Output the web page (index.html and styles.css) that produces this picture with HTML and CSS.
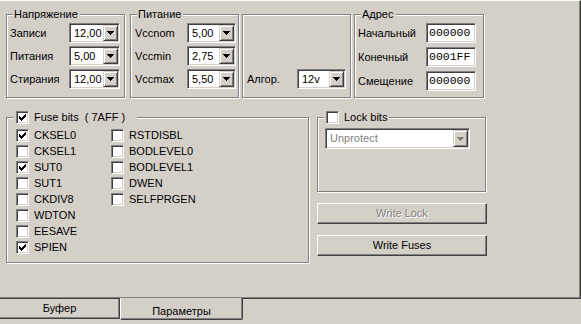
FILE: index.html
```html
<!DOCTYPE html>
<html>
<head>
<meta charset="utf-8">
<link rel="stylesheet" href="styles.css">
</head>
<body>
<div class="panel">
  <div class="top-row">
    <div class="group g1">
      <span class="legend">Напряжение</span>
      <div class="field"><span>Записи</span><div class="combo w51"><span class="val">12,00</span><span class="dd"><svg width="7" height="4" viewBox="0 0 7 4"><path d="M0 0h7v1h-7z M1 1h5v1h-5z M2 2h3v1h-3z M3 3h1v1h-1z" fill="#000"/></svg></span></div></div>
      <div class="field"><span>Питания</span><div class="combo w51"><span class="val">5,00</span><span class="dd"><svg width="7" height="4" viewBox="0 0 7 4"><path d="M0 0h7v1h-7z M1 1h5v1h-5z M2 2h3v1h-3z M3 3h1v1h-1z" fill="#000"/></svg></span></div></div>
      <div class="field"><span>Стирания</span><div class="combo w51"><span class="val">12,00</span><span class="dd"><svg width="7" height="4" viewBox="0 0 7 4"><path d="M0 0h7v1h-7z M1 1h5v1h-5z M2 2h3v1h-3z M3 3h1v1h-1z" fill="#000"/></svg></span></div></div>
    </div>
    <div class="group g2">
      <span class="legend">Питание</span>
      <div class="field"><span>Vccnom</span><div class="combo w49"><span class="val">5,00</span><span class="dd"><svg width="7" height="4" viewBox="0 0 7 4"><path d="M0 0h7v1h-7z M1 1h5v1h-5z M2 2h3v1h-3z M3 3h1v1h-1z" fill="#000"/></svg></span></div></div>
      <div class="field"><span>Vccmin</span><div class="combo w49"><span class="val">2,75</span><span class="dd"><svg width="7" height="4" viewBox="0 0 7 4"><path d="M0 0h7v1h-7z M1 1h5v1h-5z M2 2h3v1h-3z M3 3h1v1h-1z" fill="#000"/></svg></span></div></div>
      <div class="field"><span>Vccmax</span><div class="combo w49"><span class="val">5,50</span><span class="dd"><svg width="7" height="4" viewBox="0 0 7 4"><path d="M0 0h7v1h-7z M1 1h5v1h-5z M2 2h3v1h-3z M3 3h1v1h-1z" fill="#000"/></svg></span></div></div>
    </div>
    <div class="group g3">
      <div class="field"><span>Алгор.</span><div class="combo w49"><span class="val">12v</span><span class="dd"><svg width="7" height="4" viewBox="0 0 7 4"><path d="M0 0h7v1h-7z M1 1h5v1h-5z M2 2h3v1h-3z M3 3h1v1h-1z" fill="#000"/></svg></span></div></div>
    </div>
    <div class="group g4">
      <span class="legend">Адрес</span>
      <div class="field"><span>Начальный</span><div class="edit">000000</div></div>
      <div class="field"><span>Конечный</span><div class="edit">0001FF</div></div>
      <div class="field"><span>Смещение</span><div class="edit">000000</div></div>
    </div>
  </div>
  <div class="bottom-row">
    <div class="group gfuse">
      <span class="legend cblegend fuse-legend"><span class="cb"><svg width="7" height="7" viewBox="0 0 7 7"><path d="M6 0h1v1h-1z M5 1h2v1h-2z M0 2h1v1h-1z M4 2h3v1h-3z M0 3h2v1h-2z M3 3h3v1h-3z M0 4h5v1h-5z M1 5h3v1h-3z M2 6h1v1h-1z" fill="#000"/></svg></span><span>Fuse bits&nbsp; ( 7AFF )</span></span>
      <div class="fuses">
        <div class="cbi"><span class="cb"><svg width="7" height="7" viewBox="0 0 7 7"><path d="M6 0h1v1h-1z M5 1h2v1h-2z M0 2h1v1h-1z M4 2h3v1h-3z M0 3h2v1h-2z M3 3h3v1h-3z M0 4h5v1h-5z M1 5h3v1h-3z M2 6h1v1h-1z" fill="#000"/></svg></span><span>CKSEL0</span></div>
        <div class="cbi"><span class="cb"></span><span>CKSEL1</span></div>
        <div class="cbi"><span class="cb"><svg width="7" height="7" viewBox="0 0 7 7"><path d="M6 0h1v1h-1z M5 1h2v1h-2z M0 2h1v1h-1z M4 2h3v1h-3z M0 3h2v1h-2z M3 3h3v1h-3z M0 4h5v1h-5z M1 5h3v1h-3z M2 6h1v1h-1z" fill="#000"/></svg></span><span>SUT0</span></div>
        <div class="cbi"><span class="cb"></span><span>SUT1</span></div>
        <div class="cbi"><span class="cb"></span><span>CKDIV8</span></div>
        <div class="cbi"><span class="cb"></span><span>WDTON</span></div>
        <div class="cbi"><span class="cb"></span><span>EESAVE</span></div>
        <div class="cbi"><span class="cb"><svg width="7" height="7" viewBox="0 0 7 7"><path d="M6 0h1v1h-1z M5 1h2v1h-2z M0 2h1v1h-1z M4 2h3v1h-3z M0 3h2v1h-2z M3 3h3v1h-3z M0 4h5v1h-5z M1 5h3v1h-3z M2 6h1v1h-1z" fill="#000"/></svg></span><span>SPIEN</span></div>
        <div class="cbi"><span class="cb"></span><span>RSTDISBL</span></div>
        <div class="cbi"><span class="cb"></span><span>BODLEVEL0</span></div>
        <div class="cbi"><span class="cb"></span><span>BODLEVEL1</span></div>
        <div class="cbi"><span class="cb"></span><span>DWEN</span></div>
        <div class="cbi"><span class="cb"></span><span>SELFPRGEN</span></div>
      </div>
    </div>
    <div class="rcol">
      <div class="group glock">
        <span class="legend cblegend lock-legend"><span class="cb"></span><span>Lock bits</span></span>
        <div class="combo disabled wlock"><span class="val">Unprotect</span><span class="dd"><svg width="7" height="4" viewBox="0 0 7 4"><path d="M0 0h7v1h-7z M1 1h5v1h-5z M2 2h3v1h-3z M3 3h1v1h-1z" fill="#808080"/></svg></span></div>
      </div>
      <div class="button disabled-btn">Write Lock</div>
      <div class="button">Write Fuses</div>
    </div>
  </div>
</div>
<div class="tabs">
  <div class="tab tab-inactive">Буфер</div>
  <div class="tab tab-active">Параметры</div>
</div>
</body>
</html>
```

FILE: styles.css
```css
html, body {
  margin: 0;
  padding: 0;
}
body {
  background: #d4d0c8;
  width: 581px;
  height: 324px;
  overflow: hidden;
  font-family: "Liberation Sans", Arial, sans-serif;
  font-size: 11px;
  color: #000;
}
.panel {
  box-sizing: border-box;
  width: 581px;
  height: 299px;
  border-top: 1px solid #fff;
  border-right: 1px solid #404040;
  border-bottom: 1px solid #404040;
  box-shadow: inset -1px -1px 0 #808080;
  padding: 13px 0 0 6px;
}
.top-row {
  display: flex;
  height: 84px;
}
.group {
  position: relative;
  box-sizing: border-box;
  border: 1px solid #808080;
  box-shadow: inset 1px 1px 0 #fff, 1px 1px 0 #fff;
  display: flex;
  flex-direction: column;
}
.legend {
  position: absolute;
  top: -7px;
  left: 6px;
  height: 13px;
  line-height: 13px;
  padding: 0 2px 0 1px;
  background: #d4d0c8;
  white-space: nowrap;
}
.g1 {
  width: 119px;
  height: 84px;
  padding: 8px 4px 0 3px;
  gap: 3px;
  margin-right: 5px;
}
.g2 {
  width: 109px;
  height: 84px;
  padding: 8px 2px 0 4px;
  gap: 3px;
  margin-right: 3px;
}
.g3 {
  width: 109px;
  height: 84px;
  padding: 0 4px 8px 4px;
  justify-content: flex-end;
  margin-right: 3px;
}
.g4 {
  width: 130px;
  height: 84px;
  padding: 8px 7px 0 3px;
  gap: 4px;
}
.field {
  display: flex;
  align-items: center;
  justify-content: space-between;
  height: 20px;
}
.combo {
  box-sizing: border-box;
  height: 20px;
  background: #fff;
  border: 1px solid;
  border-color: #808080 #fff #fff #808080;
  box-shadow: inset 1px 1px 0 #404040, inset -1px -1px 0 #d4d0c8;
  padding: 1px;
  display: flex;
  align-items: stretch;
  justify-content: space-between;
}
.w51 { width: 51px; }
.w49 { width: 49px; }
.combo .val {
  padding-left: 3px;
  line-height: 16px;
  font-size: 11px;
}
.dd {
  box-sizing: border-box;
  width: 15px;
  background: #d4d0c8;
  border: 1px solid;
  border-color: #d4d0c8 #404040 #404040 #d4d0c8;
  box-shadow: inset 1px 1px 0 #fff, inset -1px -1px 0 #808080;
  display: flex;
  align-items: center;
  justify-content: center;
}
.dd svg {
  display: block;
}
.edit {
  box-sizing: border-box;
  width: 50px;
  height: 20px;
  background: #fff;
  border: 1px solid;
  border-color: #808080 #fff #fff #808080;
  box-shadow: inset 1px 1px 0 #404040, inset -1px -1px 0 #d4d0c8;
  padding-left: 2px;
  font-family: "Liberation Mono", "Courier New", monospace;
  font-size: 11.5px;
  line-height: 18px;
}
.bottom-row {
  display: flex;
  margin-top: 19px;
}
.gfuse {
  width: 303px;
  height: 146px;
  padding: 9px 0 0 9px;
  margin-right: 8px;
}
.cblegend {
  display: flex;
  align-items: center;
  gap: 5px;
  padding-left: 2px;
}
.fuse-legend {
  width: 119px;
  padding-left: 3px;
}
.lock-legend {
  padding-right: 2px;
}
.fuses {
  display: grid;
  grid-template-rows: repeat(8, 16px);
  grid-template-columns: 95px auto;
  grid-auto-flow: column;
}
.cbi {
  display: flex;
  align-items: center;
  gap: 5px;
}
.cb {
  box-sizing: border-box;
  width: 13px;
  height: 13px;
  flex: none;
  background: #fff;
  border: 1px solid;
  border-color: #808080 #fff #fff #808080;
  box-shadow: inset 1px 1px 0 #404040, inset -1px -1px 0 #d4d0c8;
  display: flex;
  align-items: center;
  justify-content: center;
}
.cb svg {
  display: block;
}
.rcol {
  display: flex;
  flex-direction: column;
  width: 170px;
}
.glock {
  width: 169px;
  height: 75px;
  padding: 10px 0 0 7px;
}
.wlock {
  width: 145px;
  height: 21px;
}
.wlock .val {
  line-height: 17px;
}
.combo.disabled .val {
  color: #808080;
}
.button {
  box-sizing: border-box;
  margin-top: 11px;
  width: 170px;
  height: 21px;
  border: 1px solid;
  border-color: #fff #404040 #404040 #fff;
  box-shadow: inset -1px -1px 0 #808080;
  text-align: center;
  line-height: 19px;
}
.disabled-btn {
  color: #808080;
  text-shadow: 1px 1px 0 #fff;
}
.tabs {
  display: flex;
  height: 25px;
}
.tab {
  box-sizing: border-box;
  text-align: center;
}
.tab-inactive {
  width: 120px;
  height: 20px;
  border-right: 1px solid #404040;
  border-bottom: 1px solid #404040;
  box-shadow: inset -1px -1px 0 #808080;
  line-height: 19px;
}
.tab-active {
  width: 123px;
  height: 22px;
  margin-top: -1px;
  background: #d4d0c8;
  border-left: 1px solid #fff;
  border-right: 1px solid #404040;
  border-bottom: 1px solid #404040;
  border-bottom-right-radius: 2px;
  box-shadow: inset -1px -1px 0 #808080;
  padding-top: 7px;
  line-height: 13px;
}
```
